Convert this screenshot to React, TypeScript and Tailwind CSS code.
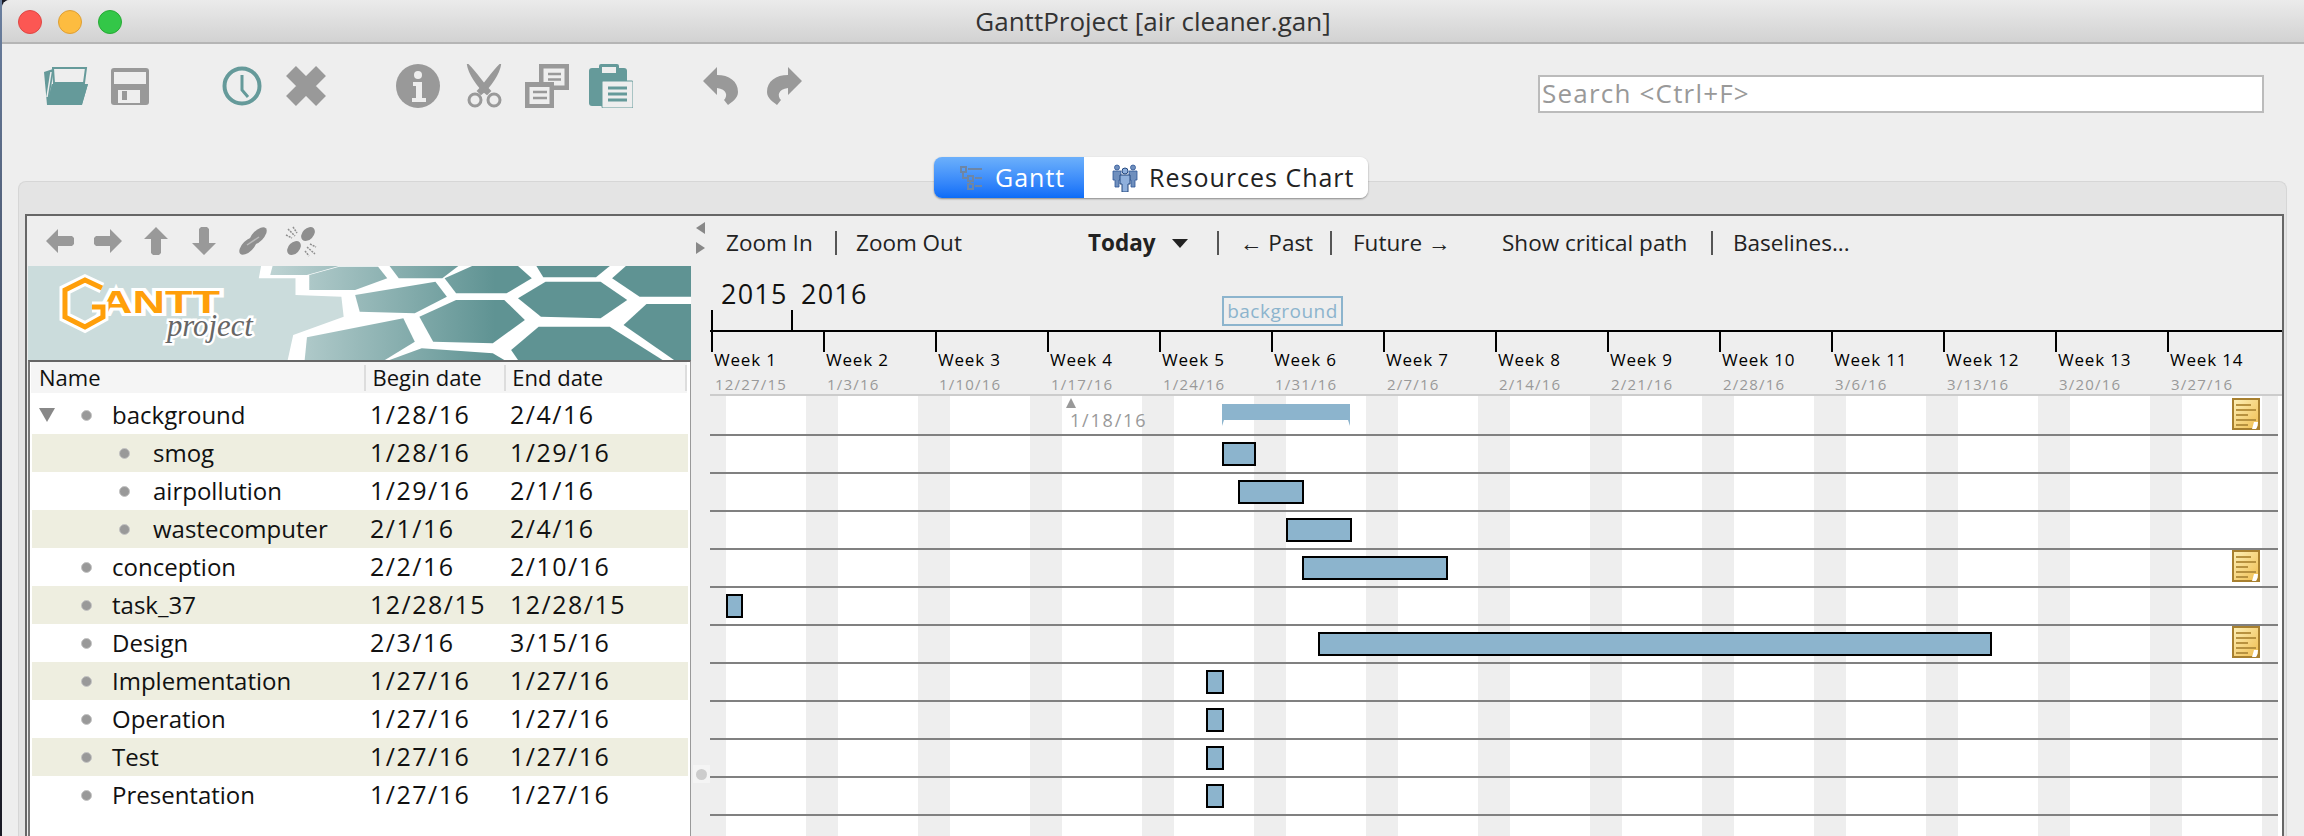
const tasks = [
  { name: "background", begin: "1/28/16", end: "2/4/16", child: false, open: true },
  { name: "smog", begin: "1/28/16", end: "1/29/16", child: true },
  { name: "airpollution", begin: "1/29/16", end: "2/1/16", child: true },
  { name: "wastecomputer", begin: "2/1/16", end: "2/4/16", child: true },
  { name: "conception", begin: "2/2/16", end: "2/10/16", child: false },
  { name: "task_37", begin: "12/28/15", end: "12/28/15", child: false },
  { name: "Design", begin: "2/3/16", end: "3/15/16", child: false },
  { name: "Implementation", begin: "1/27/16", end: "1/27/16", child: false },
  { name: "Operation", begin: "1/27/16", end: "1/27/16", child: false },
  { name: "Test", begin: "1/27/16", end: "1/27/16", child: false },
  { name: "Presentation", begin: "1/27/16", end: "1/27/16", child: false },
]

const weeks = [
  "12/27/15", "1/3/16", "1/10/16", "1/17/16", "1/24/16", "1/31/16", "2/7/16",
  "2/14/16", "2/21/16", "2/28/16", "3/6/16", "3/13/16", "3/20/16", "3/27/16",
]

// x is measured from the left edge of the chart
const bars: Record<number, { x: number; w: number }> = {
  1: { x: 512, w: 34 },
  2: { x: 528, w: 66 },
  3: { x: 576, w: 66 },
  4: { x: 592, w: 146 },
  5: { x: 16, w: 17 },
  6: { x: 608, w: 674 },
  7: { x: 496, w: 18 },
  8: { x: 496, w: 18 },
  9: { x: 496, w: 18 },
  10: { x: 496, w: 18 },
}

const stripes = Array.from({ length: 15 }, (_, i) => -16 + i * 112)

const Folder = () => (
  <svg width="44" height="38" viewBox="0 0 44 38">
    <path d="M0 5 L9 2 L9 8 L5 32 L8 17 L44 17 L38 38 L3 38 Z" fill="#659a9a" />
    <path d="M9 1 H42 L40 16 H10 Z" fill="#eee" stroke="#659a9a" strokeWidth="2" />
    <path d="M8 17 H44 L38 37 H3 Z" fill="#659a9a" />
    <path d="M7 5 L3 30" stroke="#eee" strokeWidth="1.5" />
  </svg>
)

const Save = () => (
  <svg width="38" height="37" viewBox="0 0 38 37">
    <rect width="38" height="37" rx="3" fill="#999" />
    <rect x="3" y="4" width="32" height="12" fill="#eee" />
    <rect x="7" y="22" width="22" height="13" fill="#eee" />
    <rect x="11" y="23" width="5" height="9" fill="#999" />
  </svg>
)

const Clock = () => (
  <svg width="40" height="40" viewBox="0 0 40 40" fill="none" stroke="#659a9a">
    <circle cx="20" cy="20" r="17.5" strokeWidth="4" />
    <path d="M20 9 V24 L26 31" strokeWidth="3" />
  </svg>
)

const Cross = () => (
  <svg width="44" height="44" viewBox="0 0 44 44" stroke="#999" strokeWidth="14">
    <path d="M7 7 L37 37 M37 7 L7 37" />
  </svg>
)

const Info = () => (
  <svg width="44" height="44" viewBox="0 0 44 44">
    <circle cx="22" cy="22" r="22" fill="#999" />
    <circle cx="22" cy="11" r="4" fill="#eee" />
    <path d="M17 18 H26 V34 H30 V38 H16 V34 H20 V22 H17 Z" fill="#eee" />
  </svg>
)

const Scissors = () => (
  <svg width="38" height="44" viewBox="0 0 38 44">
    <path d="M3 1 C4 8 12 22 22 30 L25 27 C18 20 12 10 3 1 Z" fill="#999" stroke="#999" strokeWidth="2" />
    <path d="M35 1 C34 8 26 22 16 30 L13 27 C20 20 26 10 35 1 Z" fill="#999" stroke="#999" strokeWidth="2" />
    <circle cx="10" cy="36" r="6" fill="none" stroke="#999" strokeWidth="3" />
    <circle cx="29" cy="36" r="6" fill="none" stroke="#999" strokeWidth="3" />
  </svg>
)

const Copy = () => (
  <svg width="44" height="44" viewBox="0 0 44 44">
    <rect x="14" y="0" width="30" height="26" fill="#999" />
    <rect x="18.5" y="4.5" width="21" height="17" fill="#eee" />
    <path d="M23 10 H36 M23 15.5 H36" stroke="#999" strokeWidth="2.5" />
    <rect x="0" y="18" width="29" height="26" fill="#999" />
    <rect x="4.5" y="23" width="20" height="17" fill="#eee" />
    <path d="M8 28 H22 M8 34 H22" stroke="#999" strokeWidth="2.5" />
  </svg>
)

const Paste = () => (
  <svg width="44" height="44" viewBox="0 0 44 44">
    <rect y="4" width="38" height="38" rx="3" fill="#659a9a" />
    <rect x="10" y="0" width="20" height="10" rx="2" fill="#659a9a" />
    <rect x="13" y="3" width="14" height="6" fill="#eee" />
    <rect x="13" y="17" width="31" height="27" rx="1" fill="#eee" stroke="#659a9a" strokeWidth="1" />
    <path d="M19 24 H38 M19 30 H38 M19 36 H38" stroke="#659a9a" strokeWidth="3" />
  </svg>
)

const Undo = ({ flip }: { flip?: boolean }) => (
  <svg width="35" height="38" viewBox="0 0 35 38" className={flip ? "-scale-x-100" : ""}>
    <path d="M0 14 L14 0 V8 C26 8 35 14 35 25 C35 31 29 35 25 38 L21 33 C25 29 24 22 14 21 V28 Z" fill="#999" />
  </svg>
)

const ArrowLeft = ({ flip }: { flip?: boolean }) => (
  <svg width="28" height="24" viewBox="0 0 28 24" className={flip ? "-scale-x-100" : ""}>
    <path d="M0 12 L12 0 V7 H26 L28 9 V15 L26 17 H12 V24 Z" fill="#999" />
  </svg>
)

const ArrowUp = ({ flip }: { flip?: boolean }) => (
  <svg width="24" height="28" viewBox="0 0 24 28" className={flip ? "-scale-y-100" : ""}>
    <path d="M12 0 L24 12 H17 V26 L15 28 H9 L7 26 V12 H0 Z" fill="#999" />
  </svg>
)

const Link = () => (
  <svg width="30" height="30" viewBox="0 0 30 30">
    <ellipse cx="10" cy="20" rx="11" ry="5.5" transform="rotate(-45 10 20)" fill="#8f8f8f" />
    <ellipse cx="20" cy="10" rx="11" ry="5.5" transform="rotate(-45 20 10)" fill="#8f8f8f" />
    <path d="M9 19 L21 11" stroke="#bbb" strokeWidth="1.5" />
  </svg>
)

const Unlink = () => (
  <svg width="32" height="32" viewBox="0 0 32 32" fill="none" stroke="#8f8f8f">
    <ellipse cx="9" cy="23" rx="8" ry="5.5" transform="rotate(-45 9 23)" fill="#8f8f8f" stroke="none" />
    <ellipse cx="23" cy="9" rx="8" ry="5.5" transform="rotate(-45 23 9)" fill="#8f8f8f" stroke="none" />
    <path d="M3 4 L10 11 M8 2 L12 8 M1 10 L7 13 M22 22 L30 29 M20 26 L24 31 M25 19 L31 22" strokeWidth="1.5" strokeDasharray="2 1" />
  </svg>
)

const GanttIcon = () => (
  <svg width="22" height="24" viewBox="0 0 22 24" fill="none" stroke="#6d86a6" strokeWidth="2">
    <rect x="1" y="1" width="5" height="5" />
    <rect x="8" y="10" width="5" height="5" />
    <rect x="8" y="18" width="5" height="5" />
    <path d="M3 6 V12 H8 M10 15 V18 M8 3 H22 M15 12 H22 M15 20 H22" />
  </svg>
)

const PeopleIcon = () => (
  <svg width="26" height="28" viewBox="0 0 26 28">
    <g fill="#6f8fbd" stroke="#2f5597" strokeWidth="0.8">
      <circle cx="5" cy="3.5" r="2.5" />
      <circle cx="21" cy="3.5" r="2.5" />
      <path d="M1 7 H9 V16 H7 V23 H3 V16 H1 Z" />
      <path d="M17 7 H25 V16 H23 V23 H19 V16 H17 Z" />
    </g>
    <g fill="#8fb0dc" stroke="#24487f" strokeWidth="1">
      <circle cx="13" cy="7" r="3" />
      <path d="M8 11 H18 V20 H16 V28 H10 V20 H8 Z" />
    </g>
  </svg>
)

const NoteIcon = () => (
  <svg width="28" height="32" viewBox="0 0 28 32">
    <defs>
      <linearGradient id="note" x1="0" y1="0" x2="1" y2="1">
        <stop offset="0" stopColor="#fdf0b8" />
        <stop offset="1" stopColor="#f0bd4e" />
      </linearGradient>
    </defs>
    <rect x="1" y="1" width="26" height="30" fill="url(#note)" stroke="#a8802f" strokeWidth="2" />
    <path d="M4 7 H19 M4 12 H24 M4 17 H16 M4 22 H24 M4 27 H16" stroke="#b8923f" strokeWidth="2" />
    <path d="M20 31 L22 24 H26 L25 31 Z" fill="#fff" />
    <path d="M24 31 L27 26 V31 Z" fill="#a8802f" />
  </svg>
)

const Logo = () => (
  <g transform="translate(62 198) scale(2.178 3)">
    <text
      x="72"
      y="47"
      fontFamily="'Liberation Sans', sans-serif"
      fontWeight="700"
      fontSize="32"
      textLength="120"
      lengthAdjust="spacingAndGlyphs"
      fill="#ff9f0a"
      stroke="#fff"
      strokeWidth="6"
      paintOrder="stroke"
    >
      ANTT
    </text>
    <path
      d="M74 22 L57 14 L37 24 V51 L57 61 L75 51 V41 H64"
      fill="none"
      stroke="#fff"
      strokeWidth="11"
    />
    <path
      d="M74 22 L57 14 L37 24 V51 L57 61 L75 51 V41 H64"
      fill="none"
      stroke="#ff9f0a"
      strokeWidth="5"
    />
    <text
      x="139"
      y="70"
      fontFamily="'Liberation Serif', serif"
      fontStyle="italic"
      fontSize="32"
      textLength="86"
      lengthAdjust="spacingAndGlyphs"
      fill="#666"
      stroke="#fff"
      strokeWidth="5"
      paintOrder="stroke"
    >
      project
    </text>
  </g>
)

const Banner = () => (
  <svg width="663" height="94" viewBox="62 198 1445 282" preserveAspectRatio="none" className="block shrink-0">
    <defs>
      <linearGradient id="hex" gradientUnits="userSpaceOnUse" x1="520" y1="0" x2="1080" y2="0">
        <stop offset="0" stopColor="#cbdcdc" />
        <stop offset="1" stopColor="#5f9393" />
      </linearGradient>
    </defs>
    <rect x="62" y="198" width="1445" height="282" fill="#cbdcdc" />
    <path d="M570 198 L565 235 H645 V285 L745 290 L750 350 L640 405 L628 480 H1507 V198 Z" fill="#fff" />
    <g fill="url(#hex)">
      <path d="M595 198 H740 L670 225 H590 Z" />
      <path d="M675 225 L740 200 H825 L845 235 L775 270 H675 Z" />
      <path d="M775 285 L950 245 L975 290 L905 340 L785 335 Z" />
      <path d="M850 198 H1000 L965 235 H870 Z" />
      <path d="M970 235 L1030 198 H1130 L1160 235 L1105 280 H995 Z" />
      <path d="M915 350 L995 300 H1100 L1145 360 L1075 430 L945 425 Z" />
      <path d="M1130 295 L1190 245 H1310 L1368 300 L1310 355 L1180 350 Z" />
      <path d="M1170 198 H1330 L1300 232 H1185 Z" />
      <path d="M1335 235 L1365 198 H1507 V290 H1395 Z" />
      <path d="M1360 375 L1410 312 H1507 V480 H1470 Z" />
      <path d="M1115 450 L1175 380 H1330 L1445 480 H1130 Z" />
      <path d="M850 480 L920 445 L1075 460 L1100 480 Z" />
      <path d="M670 412 L880 355 L905 425 L840 480 H665 Z" />
    </g>
    <Logo />
  </svg>
)

const Sep = () => <span className="block w-[2px] h-[24px] bg-[#555] shrink-0" />

const ChartToolbar = () => (
  <div className="flex h-[50px] items-center text-[22.5px] text-[#222] whitespace-nowrap shrink-0 pl-[16px] pt-[4px]">
    <span className="w-[87px]">Zoom In</span>
    <span className="ml-[22px]"><Sep /></span>
    <span className="ml-[19px] w-[107px]">Zoom Out</span>
    <span className="ml-[125px] w-[67px] font-bold">Today</span>
    <span className="ml-[17px] w-0 h-0 border-x-[8px] border-x-transparent border-t-[9px] border-t-[#222]" />
    <span className="ml-[29px]"><Sep /></span>
    <span className="ml-[21px] w-[70px]">← Past</span>
    <span className="ml-[20px]"><Sep /></span>
    <span className="ml-[21px] w-[95px]">Future →</span>
    <span className="ml-[54px] w-[187px]">Show critical path</span>
    <span className="ml-[22px]"><Sep /></span>
    <span className="ml-[20px]">Baselines...</span>
  </div>
)

const Timeline = () => (
  <div className="relative shrink-0">
    <div className="flex h-[66px] items-end border-b-2 border-black pl-[1px]">
      {["2015", "2016"].map((year) => (
        <div key={year} className="w-[80px] flex flex-col justify-end">
          <span className="pl-[10px] text-[27px] leading-[32px] text-[#111] tracking-[1.2px]">{year}</span>
          <span className="w-[2px] h-[20px] bg-black" />
        </div>
      ))}
    </div>
    <div className="flex h-[64px] border-b-2 border-[#ccc] pl-[1px]">
      {weeks.map((date, i) => (
        <div key={date} className="w-[112px] shrink-0">
          <span className="block w-[2px] h-[20px] bg-black" />
          <div className="pl-[3px] text-[17px] leading-[16px] text-black tracking-[0.8px]">Week {i + 1}</div>
          <div className="pl-[4px] mt-[7px] text-[15px] leading-[18px] text-[#999] tracking-[1.2px]">{date}</div>
        </div>
      ))}
    </div>
    <div className="absolute left-[512px] top-[30px] w-[121px] h-[30px] border-2 border-[#8cb4cd] text-[#8cb4cd] text-[19px] leading-[26px] text-center tracking-[0.5px]">
      background
    </div>
  </div>
)

const ChartRows = () => (
  <div className="relative flex-1 bg-white overflow-hidden">
    <div className="absolute inset-y-0 left-0 w-[1568px] overflow-hidden">
      {stripes.map((x) => (
        <div key={x} className="absolute inset-y-0 w-[32px] bg-[#eee]" style={{ left: x }} />
      ))}
    </div>
    <div className="relative w-[1568px]">
      {tasks.map((task, i) => {
        const bar = bars[i]
        return (
          <div key={task.name} className={`relative border-b-2 border-[#808080] ${i === 0 ? "h-[40px]" : "h-[38px]"}`}>
            {bar && (
              <div
                className="absolute top-[6px] h-[24px] bg-[#8cb4cd] border-2 border-black"
                style={{ left: bar.x, width: bar.w }}
              />
            )}
            {i === 0 && (
              <>
                <svg width="128" height="22" viewBox="0 0 128 22" className="absolute left-[512px] top-[8px]">
                  <path d="M0 0 H128 V22 L126 16 H2 L0 22 Z" fill="#8cb4cd" />
                </svg>
                <span className="absolute left-[356px] top-[2px] w-0 h-0 border-x-[5px] border-x-transparent border-b-[10px] border-b-[#999]" />
                <span className="absolute left-[360px] top-[14px] text-[18px] leading-[20px] text-[#999] tracking-[1.8px]">
                  1/18/16
                </span>
              </>
            )}
            {(i === 0 || i === 4 || i === 6) && (
              <div className={`absolute left-[1522px] ${i === 0 ? "top-[2px]" : "top-0"}`}>
                <NoteIcon />
              </div>
            )}
          </div>
        )
      })}
    </div>
  </div>
)

const TaskTable = () => (
  <div className="flex-1 bg-white border-t-2 border-t-[#666] border-l-2 border-l-[#777] border-r border-r-[#999] ml-[1px] flex flex-col">
    <div className="flex items-center h-[31px] bg-[#f5f5f5] text-[22px] text-[#111] shrink-0 mr-[3px] ml-[1px]">
      <span className="pl-[8px] w-[334px]">Name</span>
      <span className="w-[2px] h-[26px] bg-[#ddd]" />
      <span className="pl-[6px] w-[138px]">Begin date</span>
      <span className="w-[2px] h-[26px] bg-[#ddd]" />
      <span className="pl-[6px] w-[179px]">End date</span>
      <span className="w-[2px] h-[26px] bg-[#ddd]" />
    </div>
    <div className="h-[3px] shrink-0" />
    {tasks.map((task, i) => (
      <div
        key={task.name}
        className={`flex items-center h-[38px] mx-[2px] text-[24px] text-[#111] shrink-0 whitespace-nowrap ${i % 2 === 1 ? "bg-[#eeeee0]" : ""}`}
      >
        <div className={`flex items-center shrink-0 ${task.child ? "w-[87px]" : "w-[49px]"}`}>
          {task.open && (
            <span className="ml-[7px] w-0 h-0 border-x-[8px] border-x-transparent border-t-[14px] border-t-[#888]" />
          )}
        </div>
        <span className="w-[11px] h-[11px] rounded-full bg-[#999] border border-[#c4c4c4] shrink-0" />
        <span className={task.child ? "ml-[23px] w-[217px]" : "ml-[20px] w-[258px]"}>{task.name}</span>
        <span className="w-[140px] text-[25px] tracking-[1.5px]">{task.begin}</span>
        <span className="text-[25px] tracking-[1.5px]">{task.end}</span>
      </div>
    ))}
  </div>
)

const App = () => {
  return (
    <div className="w-[2304px] h-[836px] overflow-hidden flex bg-[#1a1a24] font-['Open_Sans',sans-serif]">
      <div className="w-[2px] bg-gradient-to-b from-[#6a7f9f] to-[#1a1a24] shrink-0" />
      <div className="flex-1 flex flex-col bg-[#eee] rounded-tl-[8px] overflow-hidden">
        {/* Title bar */}
        <div className="relative flex items-center justify-center h-[44px] shrink-0 bg-gradient-to-b from-[#ebebeb] to-[#d2d2d2] border-b-2 border-[#b5b5b5]">
          <div className="absolute left-[16px] top-[10px] flex gap-[16px]">
            <span className="w-[24px] h-[24px] rounded-full bg-[#fc5753] border border-[#df4744]" />
            <span className="w-[24px] h-[24px] rounded-full bg-[#fdbc40] border border-[#de9f34]" />
            <span className="w-[24px] h-[24px] rounded-full bg-[#33c748] border border-[#27aa35]" />
          </div>
          <span className="text-[26px] text-[#333]">GanttProject [air cleaner.gan]</span>
        </div>

        {/* Main toolbar */}
        <div className="flex items-start h-[137px] shrink-0 pl-[42px] pr-[40px]">
          <div className="flex items-center h-[44px] mt-[20px]">
            <Folder />
            <span className="ml-[23px]"><Save /></span>
            <span className="ml-[73px]"><Clock /></span>
            <span className="ml-[22px]"><Cross /></span>
            <span className="ml-[68px]"><Info /></span>
            <span className="ml-[25px]"><Scissors /></span>
            <span className="ml-[22px]"><Copy /></span>
            <span className="ml-[20px]"><Paste /></span>
            <span className="ml-[70px]"><Undo /></span>
            <span className="ml-[29px]"><Undo flip /></span>
          </div>
          <div className="ml-auto mt-[31px] w-[726px] h-[38px] bg-white border-2 border-[#bbb] pl-[2px] text-[26px] leading-[33px] text-[#999] tracking-[1.2px]">
            Search {"<Ctrl+F>"}
          </div>
        </div>

        {/* Tab pane */}
        <div className="relative flex-1 flex flex-col mx-[16px] mr-[17px] bg-[#e4e4e4] border-t border-x border-[#d6d6d6] rounded-t-[8px] pt-[32px] pl-[6px] pr-[2px]">
          <div className="absolute left-[915px] top-[-25px] flex h-[41px] w-[434px] rounded-[8px] shadow-[0_1px_2px_rgba(0,0,0,0.4)]">
            <div className="flex items-center w-[150px] rounded-l-[8px] bg-gradient-to-b from-[#6cb0fb] to-[#0a6cf8] pl-[26px]">
              <GanttIcon />
              <span className="ml-[13px] text-[25px] text-white tracking-[1px]">Gantt</span>
            </div>
            <div className="flex flex-1 items-center rounded-r-[8px] bg-white pl-[28px]">
              <PeopleIcon />
              <span className="ml-[11px] text-[25px] text-[#222] tracking-[1px]">Resources Chart</span>
            </div>
          </div>

          <div className="flex-1 flex border-2 border-b-0 border-[#666] bg-[#eee] min-h-0">
            {/* Task tree */}
            <div className="flex flex-col w-[664px] shrink-0">
              <div className="flex items-center h-[50px] pl-[19px] shrink-0">
                <ArrowLeft />
                <span className="ml-[20px]"><ArrowLeft flip /></span>
                <span className="ml-[22px]"><ArrowUp /></span>
                <span className="ml-[24px]"><ArrowUp flip /></span>
                <span className="ml-[22px]"><Link /></span>
                <span className="ml-[17px]"><Unlink /></span>
              </div>
              <div className="pl-[1px] shrink-0"><Banner /></div>
              <TaskTable />
            </div>

            {/* Splitter */}
            <div className="relative w-[19px] shrink-0 flex flex-col items-center pt-[6px] gap-[8px]">
              <span className="w-0 h-0 border-y-[6px] border-y-transparent border-r-[9px] border-r-[#888]" />
              <span className="w-0 h-0 border-y-[6px] border-y-transparent border-l-[9px] border-l-[#888]" />
              <div className="absolute left-[2px] top-[549px] w-[17px] h-[18px] bg-[#f4f4f4] flex items-center justify-center">
                <span className="w-[11px] h-[11px] rounded-full bg-[#ccc]" />
              </div>
            </div>

            {/* Chart */}
            <div className="flex-1 flex flex-col min-w-0">
              <ChartToolbar />
              <Timeline />
              <ChartRows />
            </div>
          </div>
        </div>
      </div>
    </div>
  )
}

export default App
